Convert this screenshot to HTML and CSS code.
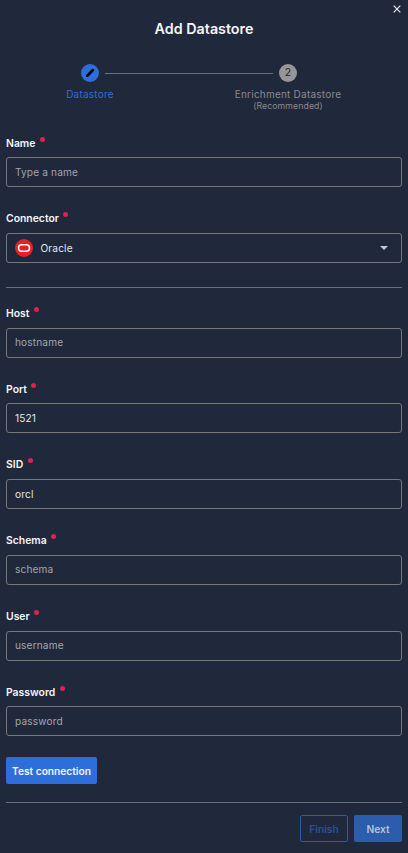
FILE: index.html
```html
<!DOCTYPE html>
<html lang="en">
<head>
<meta charset="utf-8">
<title>Add Datastore</title>
<link rel="stylesheet" href="styles.css">
</head>
<body>
<main class="dialog">
  <header class="header">
    <svg class="close" viewBox="0 0 8 8" aria-hidden="true"><path d="M.7.7l6.6 6.6M7.3.7L.7 7.3"/></svg>
    <h1 class="title">Add Datastore</h1>
  </header>
  <nav class="stepper">
    <div class="step active">
      <span class="badge"><svg class="pencil" viewBox="0 0 10 10"><path d="M1.1 8.9V7L6.3 1.8l1.9 1.9L3 8.9zM6.3 1.8l1.1-1.1q.4-.3.8 0l1.1 1.1q.3.4 0 .8L8.2 3.7z"/></svg></span>
      <span class="step-name">Datastore</span>
    </div>
    <div class="line"></div>
    <div class="step">
      <span class="badge">2</span>
      <span class="step-name">Enrichment Datastore</span>
      <span class="step-note">(Recommended)</span>
    </div>
  </nav>
  <section class="fields">
    <div class="field"><label class="label low">Name<i class="dot"></i></label><div class="input hint">Type a name</div></div>
    <div class="field"><label class="label">Connector<i class="dot"></i></label>
      <div class="input">
        <svg class="oracle" viewBox="0 0 18 18"><circle cx="9" cy="9" r="9" fill="#e52027"/><rect x="3.5" y="5.7" width="11" height="6.6" rx="3.3" fill="none" stroke="#fff" stroke-width="1.6"/></svg>
        <span>Oracle</span>
        <svg class="caret" viewBox="0 0 8 4"><path d="M0 0h8L4 4z"/></svg>
      </div>
    </div>
  </section>
  <hr class="rule">
  <section class="fields connection">
    <div class="field"><label class="label">Host<i class="dot"></i></label><div class="input hint raised">hostname</div></div>
    <div class="field tight"><label class="label low">Port<i class="dot"></i></label><div class="input">1521</div></div>
    <div class="field"><label class="label">SID<i class="dot"></i></label><div class="input">orcl</div></div>
    <div class="field"><label class="label">Schema<i class="dot"></i></label><div class="input hint raised">schema</div></div>
    <div class="field"><label class="label">User<i class="dot"></i></label><div class="input hint raised">username</div></div>
    <div class="field tight"><label class="label low">Password<i class="dot"></i></label><div class="input hint">password</div></div>
  </section>
  <button class="button test">Test connection</button>
  <hr class="rule">
  <footer class="footer">
    <button class="button finish">Finish</button>
    <button class="button next">Next</button>
  </footer>
</main>
</body>
</html>
```
FILE: styles.css
```css
* { box-sizing: border-box; }
body { margin: 0; background: #20283c; color: #f4f5f7; font: 10.5px/16px Inter, "Liberation Sans", sans-serif; }
.dialog { height: 853px; padding: 0 6px; display: flex; flex-direction: column; overflow: hidden; }
.header { height: 64px; flex: none; padding-top: 5px; display: flex; flex-direction: column; }
.close { width: 8px; height: 8px; margin-right: 1px; align-self: flex-end; fill: none; stroke: #e9eaed; stroke-width: 1.2; }
.title { margin: 6px 0 0; font-size: 14.3px; line-height: 20px; font-weight: 600; text-align: center; }
.stepper { height: 71px; flex: none; display: flex; justify-content: space-between; padding: 0 45px 0 15px; }
.step { width: 138px; display: flex; flex-direction: column; align-items: center; color: #8b8b8b; flex: none; }
.badge { width: 18px; height: 18px; border-radius: 50%; background: #969696; color: #20242c; font-size: 10.5px; line-height: 18px; display: flex; justify-content: center; align-items: center; }
.active { color: #2f6cd4; }
.active .badge { background: #2e6edb; }
.pencil { width: 10px; height: 10px; fill: #000; }
.step-name { margin-top: 5px; line-height: 15px; font-size: 10px; letter-spacing: .22px; white-space: nowrap; }
.step-note { font-size: 8.7px; line-height: 9px; letter-spacing: .12px; }
.line { flex: none; width: 168px; height: 1px; margin: 9px -54px 0; background: #667080; }
.fields { display: flex; flex-direction: column; gap: 24px; }
.field { display: flex; flex-direction: column; gap: 6px; }
.tight { margin-top: -1px; }
.label { display: flex; height: 16px; line-height: 16px; font-weight: 600; font-size: 10.4px; }
.low { line-height: 18px; }
.dot { width: 5px; height: 5px; margin: 1px 0 0 4.5px; border-radius: 50%; background: #e0204f; }
.low .dot { margin-top: 1.5px; }
.input { height: 30px; border: 1px solid #777776; border-radius: 3px; padding: 0 8px; display: flex; align-items: center; font-size: 10.1px; letter-spacing: .15px; color: #e4e6e9; }
.raised { padding-bottom: 2px; }
.hint { color: #a2a6ad; }
.oracle { width: 18px; height: 18px; margin-right: 7.5px; }
.caret { width: 8px; height: 4px; margin: 0 5px 0 auto; fill: #c3c6cc; }
.rule { width: 100%; height: 1px; margin: 24px 0 0; border: 0; background: #687080; flex: none; }
.connection { margin-top: 18px; }
.button { height: 27px; border: 0; border-radius: 2px; padding: 1px 0 0; font: 600 10.2px/26px Inter, "Liberation Sans", sans-serif; color: #f4f5f7; }
.test { width: 91px; margin-top: 21px; background: #2e6edb; flex: none; }
.test + .rule { margin-top: 18px; }
.footer { display: flex; justify-content: flex-end; gap: 6px; padding-top: 12px; }
.footer .button { width: 48px; }
.finish { background: transparent; border: 1px solid #295cac; line-height: 24px; color: #29519a; }
.next { background: #2b5cae; color: #bcc3d0; }
```
